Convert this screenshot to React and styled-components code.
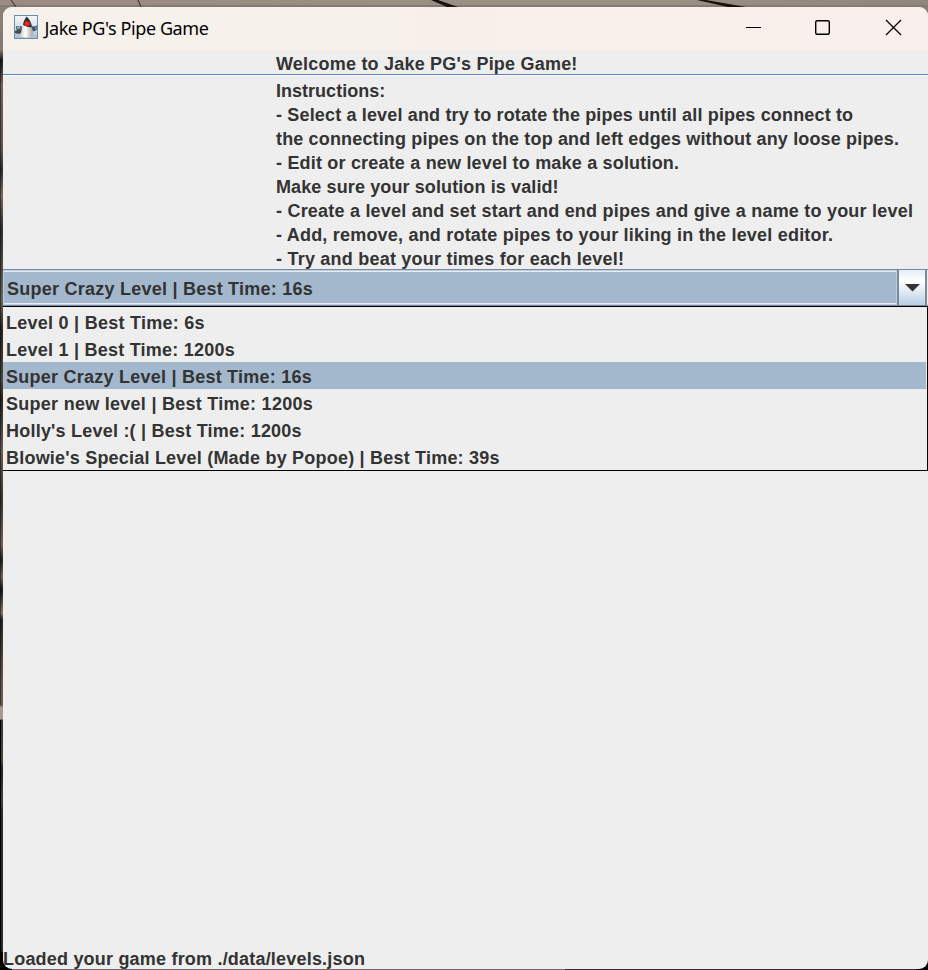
import React from "react";
import styled, { createGlobalStyle } from "styled-components";

const GlobalStyle = createGlobalStyle`
  * { box-sizing: border-box; }
  html, body { margin: 0; padding: 0; overflow: hidden; }
`;

const Desktop = styled.div`
  width: 928px;
  height: 970px;
  padding: 7px 0 1px 3px;
  position: relative;
  background:
    linear-gradient(#857b74, #857b74) 0 5px / 100% 2px no-repeat,
    linear-gradient(90deg, #9b8b82, #9a8f83 40%, #9c9084 70%, #92857b) 0 0 / 100% 7px no-repeat,
    linear-gradient(90deg, rgba(0, 0, 0, 0.45) 1px, transparent 1px) 0 60px / 3px 645px no-repeat,
    linear-gradient(90deg, #000 1px, transparent 1px) 0 720px / 3px 250px no-repeat,
    linear-gradient(180deg, #8f8279 0, #85786f 50px, #1c1716 60px, #70655c 85px, #5d544d 150px, #332d2a 170px, #746a61 195px, #332d2a 230px, #6b635b 300px, #28231f 330px, #4d463f 380px, #28231f 400px, #655c53 450px, #3a332e 500px, #6b6259 545px, #29231f 560px, #6b635b 577px, #1c1716 590px, #7d7469 613px, #29231f 620px, #60574e 680px, #6a6157 706px, #a49a8e 707px, #a49a8e 719px, #3a332d 720px, #4b443d 760px, #292420 770px, #47403a 800px, #2c2c31 812px, #2c2b30 100%);
`;

const Backdrop = styled.svg`
  position: absolute;
  left: 0;
  top: 0;
`;

const Window = styled.main`
  position: relative;
  width: 925px;
  height: 962px;
  display: flex;
  flex-direction: column;
  background: #eeeeee;
  border-radius: 9px;
  overflow: hidden;
  color: #333333;
  font: bold 18px/24px "Liberation Sans", Arial, sans-serif;
  white-space: pre;
`;

const TitleBar = styled.header`
  height: 43px;
  flex: none;
  display: flex;
  align-items: center;
  padding-left: 11px;
  background: linear-gradient(90deg, #f7f1ec, #f6f1ea 32%, #f8f0ea 60%, #f9f0ed);
  > svg { margin-top: -3px; }
`;

const Title = styled.h1`
  flex: 1;
  margin: 0 0 2px 6.5px;
  color: #000;
  font: 400 18px/24px "Noto Sans", "Open Sans", sans-serif;
  letter-spacing: -0.42px;
`;

const Controls = styled.div`
  display: flex;
  width: 210px;
`;

const WindowButton = styled.button`
  width: 70px;
  height: 43px;
  padding: 0;
  border: 0;
  background: transparent;
  display: block;
  svg { display: block; }
`;

const Welcome = styled.div`
  flex: none;
  height: 25px;
  padding: 2px 0 0 273px;
  line-height: 24px;
  border-bottom: 1px solid #6382bf;
  letter-spacing: ${(p) => p.$spacing}px;
`;

const Instructions = styled.section`
  flex: none;
  height: 194px;
  padding: 3px 0 0 273px;
  border-top: 1px solid #fff;
`;

const Line = styled.div`
  height: 24px;
  letter-spacing: ${(p) => p.$spacing}px;
`;

const Combo = styled.div`
  flex: none;
  height: 37px;
  display: flex;
  border: 1px solid #7a8a99;
  border-width: 1px 0;
  background: #a3b8cc;
`;

const ComboValue = styled.div`
  flex: 1;
  padding: 6px 0 0 3px;
  border: 1px solid #b8cfe5;
  box-shadow: inset 0 1px #e6edf4, inset 0 -1px #e6edf4;
  letter-spacing: ${(p) => p.$spacing}px;
`;

const Arrow = styled.button`
  width: 30px;
  padding: 0;
  border: 0 solid #7a8a99;
  border-width: 0 2px;
  background: linear-gradient(#e4edf6, #fff 30%, #dde8f3 65%, #b8cfe5);
  box-shadow: 1px 0 #eee;
  margin-right: 1px;
  svg { display: block; }
`;

const Popup = styled.ul`
  flex: none;
  height: 165px;
  margin: 0;
  padding: 1px 1px 0 0;
  list-style: none;
  border: 1px solid #000;
  border-left: 0;
`;

const Option = styled.li`
  height: 27px;
  padding: 3px 0 0 3px;
  background: ${(p) => (p.$selected ? "#a3b8cc" : "transparent")};
  letter-spacing: ${(p) => p.$spacing}px;
`;

const Status = styled.footer`
  margin-top: auto;
  height: 22px;
  letter-spacing: ${(p) => p.$spacing}px;
`;

const LINES = [
  ["Instructions:", 0.02],
  ["- Select a level and try to rotate the pipes until all pipes connect to", 0.157],
  ["the connecting pipes on the top and left edges without any loose pipes.", 0.155],
  ["- Edit or create a new level to make a solution.", 0.19],
  ["Make sure your solution is valid!", 0.11],
  ["- Create a level and set start and end pipes and give a name to your level", 0.215],
  ["- Add, remove, and rotate pipes to your liking in the level editor.", 0.205],
  ["- Try and beat your times for each level!", 0.22],
];

const LEVELS = [
  ["Level 0 | Best Time: 6s", 0.26],
  ["Level 1 | Best Time: 1200s", 0.24],
  ["Super Crazy Level | Best Time: 16s", 0.24],
  ["Super new level | Best Time: 1200s", 0.27],
  ["Holly's Level :( | Best Time: 1200s", 0.22],
  ["Blowie's Special Level (Made by Popoe) | Best Time: 39s", 0.21],
];

function DukeIcon() {
  return (
    <svg width="24" height="24" viewBox="0 0 24 24">
      <defs>
        <linearGradient id="tile" x1="0" y1="0" x2="0" y2="1">
          <stop offset="0" stopColor="#f3f7fa" />
          <stop offset=".55" stopColor="#d3dde6" />
          <stop offset="1" stopColor="#a9bdd0" />
        </linearGradient>
        <linearGradient id="belly" x1="0" y1="0" x2="1" y2="0">
          <stop offset="0" stopColor="#d0d0d0" />
          <stop offset=".4" stopColor="#fff" />
          <stop offset="1" stopColor="#a0a0a0" />
        </linearGradient>
      </defs>
      <rect x=".5" y=".5" width="23" height="23" fill="url(#tile)" stroke="#6d8cab" />
      <path d="M2 11h5l2 2-2 3H4l-2-2z" fill="#5d6b78" />
      <path d="M3 11.500h3v2H3z" fill="#82bce8" />
      <path d="M1 16l3-1.500h4V18l-4 1-3-1z" fill="#4a4a4a" />
      <path d="M17 11l3 .5 3-1v4l-3 2-3-2z" fill="#454f59" />
      <path d="M21 11.500h1.500v3H21z" fill="#5d9ed0" />
      <path d="M8.500 10.500H17C18.500 14 19.500 18 18.500 21 16 23 10 23 7 21.500 6 19 8 15 8.500 10.500z" fill="url(#belly)" />
      <path d="M12.500 1.500C15 3.500 17.500 7.500 18 12 16 12.500 14 12 12.500 11.500 11 11 9.500 10.500 9 9.500 9.500 6.500 11 3.500 12.500 1.500z" fill="#303030" />
      <ellipse cx="13.200" cy="8.800" rx="2.900" ry="2.500" fill="#e51d1a" />
      <circle cx="12.500" cy="8.200" r=".9" fill="#f94b3d" />
    </svg>
  );
}

export default function App() {
  return (
    <Desktop>
      <GlobalStyle />
      <Backdrop width="928" height="970" viewBox="0 0 928 970" fill="none">
        <path d="M11 0l5 7M138 0l3 7" stroke="#4b3d37" strokeWidth="1.200" />
        <path d="M431 0h7l20 7h-11zM697 0h9l40 7h-18z" fill="#1c100f" />
        <path d="M0 950v20h20M928 955v15h-20" fill="#000" />
        <path d="M3 962q3 7 10 7.500H915q8 0 13-10v10.500H3z" fill="#000" />
        <path d="M12 969.500H565" stroke="#6b6b6b" />
        <path d="M565 969.500H916" stroke="#303030" />
      </Backdrop>
      <Window>
        <TitleBar>
          <DukeIcon />
          <Title>Jake PG's Pipe Game</Title>
          <Controls>
            <WindowButton aria-label="Minimize">
              <svg width="70" height="43"><path d="M28 20.500h15" stroke="#000" /></svg>
            </WindowButton>
            <WindowButton aria-label="Maximize">
              <svg width="70" height="43" fill="none"><rect x="27.700" y="13.700" width="13.600" height="13.600" rx="1.500" stroke="#000" strokeWidth="1.400" /></svg>
            </WindowButton>
            <WindowButton aria-label="Close">
              <svg width="70" height="43"><path d="M28 13l15 15M43 13L28 28" stroke="#000" strokeWidth="1.300" /></svg>
            </WindowButton>
          </Controls>
        </TitleBar>
        <Welcome $spacing={0.21}>Welcome to Jake PG's Pipe Game!</Welcome>
        <Instructions>
          {LINES.map(([text, spacing]) => <Line key={text} $spacing={spacing}>{text}</Line>)}
        </Instructions>
        <Combo>
          <ComboValue $spacing={0.24}>Super Crazy Level | Best Time: 16s</ComboValue>
          <Arrow aria-label="Show levels">
            <svg width="26" height="35"><path d="M6 14h15l-7.500 7.500z" fill="#333" /></svg>
          </Arrow>
        </Combo>
        <Popup>
          {LEVELS.map(([text, spacing], i) => (
            <Option key={text} $selected={i === 2} $spacing={spacing}>{text}</Option>
          ))}
        </Popup>
        <Status $spacing={0.2}>Loaded your game from ./data/levels.json</Status>
      </Window>
    </Desktop>
  );
}
